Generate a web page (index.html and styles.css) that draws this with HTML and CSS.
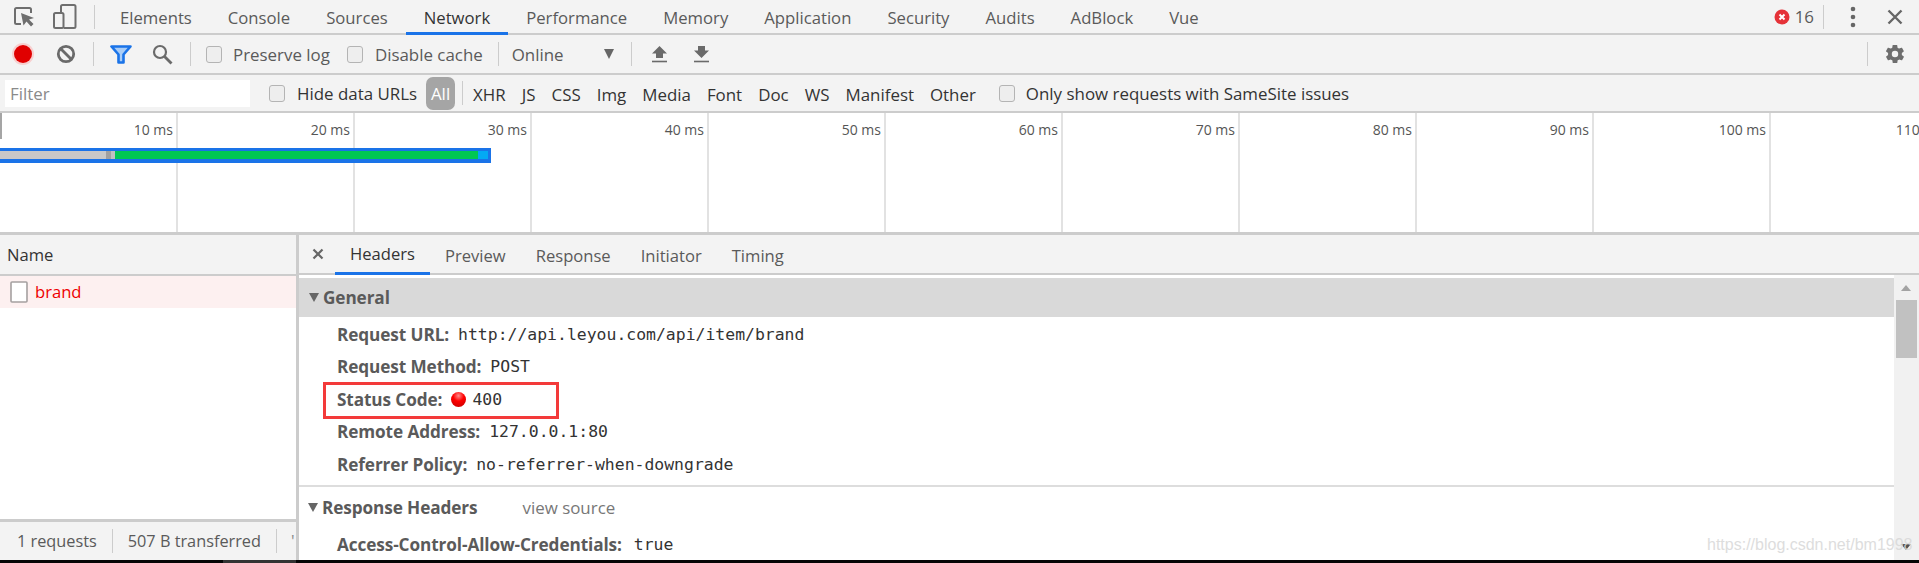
FILE: index.html
```html
<!DOCTYPE html>
<html lang="en">
<head>
<meta charset="utf-8">
<title>DevTools Network</title>
<link rel="stylesheet" href="styles.css">
</head>
<body>
<div class="app">
  <header class="bar bar-tabs">
    <svg class="ic-inspect" width="22" height="20" viewBox="0 0 22 20"><path d="M7 17H2.500A1.500 1.500 0 0 1 1 15.500V2.500A1.500 1.500 0 0 1 2.500 1h13A1.500 1.500 0 0 1 17 2.500V6" fill="none" stroke="#6e6e6e" stroke-width="2"/><path d="M7 6l13 5-5 1.500 4.500 4.500-2.500 2.500-4.500-5-3 4z" fill="#6e6e6e"/></svg>
    <svg class="ic-device" width="24" height="25" viewBox="0 0 24 25"><path d="M8 8V2.500A1.500 1.500 0 0 1 9.500 1h11.500A1.500 1.500 0 0 1 22.500 2.500V22.500A1.500 1.500 0 0 1 21 24h-10" fill="none" stroke="#6e6e6e" stroke-width="2"/><rect x="1" y="9" width="9.500" height="15" rx="1.500" fill="none" stroke="#6e6e6e" stroke-width="2"/></svg>
    <span class="sep sep-tabs"></span>
    <nav class="tabs">
      <span class="tab">Elements</span>
      <span class="tab">Console</span>
      <span class="tab">Sources</span>
      <span class="tab tab-on">Network</span>
      <span class="tab">Performance</span>
      <span class="tab">Memory</span>
      <span class="tab">Application</span>
      <span class="tab">Security</span>
      <span class="tab">Audits</span>
      <span class="tab">AdBlock</span>
      <span class="tab">Vue</span>
    </nav>
    <div class="top-right">
      <svg width="16" height="16" viewBox="0 0 16 16"><circle cx="8" cy="8" r="7.500" fill="#e53238"/><path d="M5.500 5.500l5 5m0-5l-5 5" stroke="#fff" stroke-width="2"/></svg>
      <span class="err-count">16</span>
      <span class="sep sep-err"></span>
      <svg class="ic-kebab" width="6" height="22" viewBox="0 0 6 22"><circle cx="3" cy="3" r="2.300" fill="#666"/><circle cx="3" cy="11" r="2.300" fill="#666"/><circle cx="3" cy="19" r="2.300" fill="#666"/></svg>
      <svg class="ic-close" width="16" height="16" viewBox="0 0 16 16"><path d="M1.500 1.500l13 13m0-13l-13 13" stroke="#666" stroke-width="2.400"/></svg>
    </div>
  </header>

  <div class="bar bar-tools">
    <span class="record"></span>
    <svg class="ic-stop" width="20" height="20" viewBox="0 0 20 20"><circle cx="10" cy="10" r="7.700" fill="none" stroke="#6a6a6a" stroke-width="2.800"/><path d="M4.500 4.500l11 11" stroke="#6a6a6a" stroke-width="2.800"/></svg>
    <span class="sep sep-a"></span>
    <svg class="ic-funnel" width="22" height="19" viewBox="0 0 22 19"><path d="M1.500 1.500h19l-7 8v8h-5v-8z" fill="#a9cdf7" stroke="#1a73e8" stroke-width="2.600" stroke-linejoin="round"/></svg>
    <svg class="ic-search" width="21" height="21" viewBox="0 0 21 21"><circle cx="8" cy="8" r="6" fill="none" stroke="#6a6a6a" stroke-width="2.200"/><path d="M12.500 12.500l7 7" stroke="#6a6a6a" stroke-width="2.800"/></svg>
    <span class="sep sep-b"></span>
    <span class="check check-preserve"></span>
    <span class="lbl lbl-preserve">Preserve log</span>
    <span class="check check-cache"></span>
    <span class="lbl lbl-cache">Disable cache</span>
    <span class="sep sep-c"></span>
    <span class="lbl lbl-online">Online</span>
    <span class="tri-down"></span>
    <span class="sep sep-d"></span>
    <svg class="ic-up" width="17" height="18" viewBox="0 0 17 18"><path d="M8.500 1L16 8.500h-4V13H5V8.500H1z" fill="#6a6a6a"/><path d="M1 16.500h15" stroke="#6a6a6a" stroke-width="1.600"/></svg>
    <svg class="ic-down" width="17" height="18" viewBox="0 0 17 18"><path d="M8.500 13L16 5.500h-4V1H5v4.500H1z" fill="#6a6a6a"/><path d="M1 16.500h15" stroke="#6a6a6a" stroke-width="1.600"/></svg>
    <span class="sep sep-e"></span>
    <svg class="ic-gear" width="22" height="22" viewBox="0 0 24 24"><path fill="#6e6e6e" d="M19.400 13c.1-.3.1-.7.100-1s0-.7-.1-1l2.100-1.600c.2-.2.200-.4.100-.6l-2-3.500c-.1-.2-.4-.3-.6-.2l-2.500 1c-.5-.4-1.100-.7-1.700-1l-.4-2.600c0-.2-.2-.4-.5-.4h-4c-.2 0-.4.200-.5.400l-.4 2.600c-.6.300-1.200.6-1.700 1l-2.500-1c-.2-.1-.5 0-.6.200l-2 3.500c-.1.200-.1.500.1.600L4.500 11c0 .3-.1.700-.1 1s0 .7.100 1l-2.100 1.600c-.2.200-.2.400-.1.600l2 3.500c.1.200.4.300.6.200l2.500-1c.5.400 1.100.7 1.700 1l.4 2.600c0 .2.200.4.500.4h4c.2 0 .4-.2.500-.4l.4-2.600c.6-.3 1.200-.6 1.700-1l2.500 1c.2.100.5 0 .6-.2l2-3.500c.1-.2.100-.5-.1-.6zM12 15.500a3.500 3.500 0 1 1 0-7 3.500 3.500 0 0 1 0 7z"/></svg>
  </div>

  <div class="bar bar-filter">
    <span class="filter-input">Filter</span>
    <span class="check check-hide"></span>
    <span class="lbl lbl-dark lbl-hide">Hide data URLs</span>
    <span class="pill">All</span>
    <span class="sep sep-f"></span>
    <div class="types">
      <span>XHR</span><span>JS</span><span>CSS</span><span>Img</span><span>Media</span><span>Font</span><span>Doc</span><span>WS</span><span>Manifest</span><span>Other</span>
    </div>
    <span class="check check-same"></span>
    <span class="lbl lbl-dark">Only show requests with SameSite issues</span>
  </div>

  <section class="timeline">
    <div class="ticks">
      <div class="tick">10 ms</div><div class="tick">20 ms</div><div class="tick">30 ms</div><div class="tick">40 ms</div><div class="tick">50 ms</div><div class="tick">60 ms</div><div class="tick">70 ms</div><div class="tick">80 ms</div><div class="tick">90 ms</div><div class="tick">100 ms</div><div class="tick">110 ms</div>
    </div>
    <span class="start-mark"></span>
    <div class="wbar">
      <span class="seg seg-grey"></span><span class="seg seg-dk"></span><span class="seg seg-lt"></span><span class="seg seg-green"></span><span class="seg seg-blue"></span>
    </div>
  </section>

  <main class="panes">
    <aside class="names">
      <div class="names-head">Name</div>
      <div class="names-row">
        <svg width="18" height="22" viewBox="0 0 18 22"><rect x="1" y="1" width="16" height="20" rx="1" fill="#fff" stroke="#a5a0a0" stroke-width="1.600"/></svg>
        <span class="names-text">brand</span>
      </div>
      <div class="names-fill"></div>
      <div class="status">
        <span class="st st-first">1 requests</span>
        <span class="st">507 B transferred</span>
        <span class="st-more">'</span>
      </div>
    </aside>
    <section class="detail">
      <div class="detail-tabs">
        <svg class="ic-x" width="12" height="12" viewBox="0 0 12 12"><path d="M1.500 1.500l9 9m0-9l-9 9" stroke="#666" stroke-width="2.200"/></svg>
        <span class="dtab dtab-on">Headers</span>
        <span class="dtab">Preview</span>
        <span class="dtab">Response</span>
        <span class="dtab">Initiator</span>
        <span class="dtab">Timing</span>
      </div>
      <div class="detail-body">
        <div class="content">
          <div class="sec-general"><span class="tri-open"></span><b>General</b></div>
          <div class="rows">
            <div class="row"><b>Request URL:</b><code>http://api.leyou.com/api/item/brand</code></div>
            <div class="row"><b>Request Method:</b><code>POST</code></div>
            <div class="row"><b>Status Code:</b><span class="dot"></span><code class="code-status">400</code></div>
            <div class="row"><b>Remote Address:</b><code>127.0.0.1:80</code></div>
            <div class="row"><b>Referrer Policy:</b><code>no-referrer-when-downgrade</code></div>
          </div>
          <div class="sec-resp"><span class="tri-open"></span><b>Response Headers</b><span class="view-src">view source</span></div>
          <div class="row row-last"><b>Access-Control-Allow-Credentials:</b><code>true</code></div>
          <span class="red-box"></span>
        </div>
        <div class="scroll">
          <span class="sc-up"></span>
          <span class="sc-thumb"></span>
          <span class="sc-down"></span>
        </div>
      </div>
    </section>
    <span class="mark">https://blog.csdn.net/bm1998</span>
  </main>
  <footer class="edge"><span class="edge-lit"></span></footer>
</div>
</body>
</html>
```
FILE: styles.css
```css
* { box-sizing: border-box; }
html, body { margin: 0; padding: 0; height: 100%; overflow: hidden; }
body { font-family: "Open Sans", "Noto Sans", sans-serif; font-size: 16.9px; color: #5a5a5a; background: #fff; }
.app { width: 1919px; height: 563px; display: flex; flex-direction: column; }

.bar { display: flex; align-items: center; background: #f3f3f3; flex: none; border-bottom: 2px solid #ccc; }
.bar-tabs { height: 35px; }
.bar-tools { height: 40px; }
.bar-filter { height: 38px; }
.sep { flex: none; width: 1px; background: #ccc; height: 24px; }

.ic-inspect { margin-left: 14px; flex: none; }
.ic-device { margin-left: 17px; flex: none; }
.sep-tabs { margin-left: 17px; }
.tabs { display: flex; align-self: stretch; margin-left: 7px; }
.tab { padding: 0 18px; display: flex; align-items: center; height: 35px; font-size: 16.700px; }
.tab-on { color: #333; border-bottom: 3px solid #1a73e8; padding-top: 3px; }
.top-right { margin-left: auto; display: flex; align-items: center; padding-right: 16px; }
.err-count { margin-left: 5px; }
.sep-err { margin-left: 9px; }
.ic-kebab { margin-left: 26px; }
.ic-close { margin-left: 31px; }

.record { flex: none; width: 18px; height: 18px; margin-left: 14px; border-radius: 50%; background: #e00000; box-shadow: 0 0 0 2px #f7cfcf; }
.ic-stop { flex: none; margin-left: 24px; }
.sep-a { margin-left: 17px; }
.ic-funnel { flex: none; margin-left: 16px; }
.ic-search { flex: none; margin-left: 20px; }
.sep-b { margin-left: 17px; }
.check { flex: none; width: 16px; height: 17px; border: 1.500px solid #b4b4b4; border-radius: 3px; background: #eee; }
.check-preserve { margin-left: 15px; }
.lbl { flex: none; white-space: nowrap; }
.lbl-preserve { margin-left: 11px; }
.check-cache { margin-left: 17px; }
.lbl-cache { margin-left: 12px; }
.sep-c { margin-left: 15px; }
.lbl-online { margin-left: 13px; }
.tri-down { flex: none; margin-left: 40px; width: 0; height: 0; border-left: 5.500px solid transparent; border-right: 5.500px solid transparent; border-top: 10px solid #666; }
.sep-d { margin-left: 17px; }
.ic-up { flex: none; margin-left: 19px; }
.ic-down { flex: none; margin-left: 25px; }
.sep-e { margin-left: auto; }
.ic-gear { flex: none; margin-left: 16px; margin-right: 13px; }

.filter-input { flex: none; margin-left: 5px; width: 245px; height: 27px; background: #fff; color: #8a8a8a; padding-left: 5px; display: flex; align-items: center; }
.check-hide { margin-left: 19px; }
.lbl-dark { color: #333; }
.lbl-hide { margin-left: 12px; }
.pill { flex: none; margin-left: 9px; width: 29px; height: 33px; border-radius: 7px; background: #a5a5a5; color: #fff; display: flex; align-items: center; justify-content: center; }
.sep-f { margin-left: 7px; }
.types { display: flex; gap: 16px; margin-left: 10px; color: #333; padding-top: 2px; }
.check-same { margin-left: 23px; }
.check-same + .lbl { margin-left: 11px; }

.timeline { position: relative; flex: none; height: 122px; background: #fff; border-bottom: 3px solid #ccc; overflow: hidden; }
.ticks { display: flex; height: 100%; margin-left: 1px; }
.tick { flex: none; width: 177px; padding: 7px 3px 0 0; text-align: right; font-size: 14px; color: #555; border-right: 2px solid #e2e2e2; white-space: nowrap; }
.start-mark { position: absolute; left: 0; top: 0; width: 2px; height: 26px; background: #a5a5a5; }
.wbar { position: absolute; left: 0; top: 35px; width: 491px; height: 15px; display: flex; background: #1a73e8; padding: 3px 3px 4px 0; }
.seg { display: block; height: 100%; }
.seg-grey { width: 106px; background: #c8c8c8; }
.seg-dk { width: 5px; background: #a0a0a0; }
.seg-lt { width: 4px; background: #c0c0c0; }
.seg-green { width: 363px; background: #00c853; }
.seg-blue { width: 10px; background: #03a9f4; }

.panes { position: relative; flex: 1; min-height: 0; display: flex; }
.names { flex: none; width: 299px; display: flex; flex-direction: column; border-right: 3px solid #ccc; }
.names-head { flex: none; height: 41px; background: #f3f3f3; border-bottom: 2px solid #ccc; padding-left: 7px; display: flex; align-items: center; color: #333; font-size: 16.600px; }
.names-row { flex: none; height: 32px; background: #fdf0f0; color: #ee0000; display: flex; align-items: center; padding-left: 10px; gap: 7px; font-size: 16.600px; }
.names-text { padding-bottom: 2px; }
.names-fill { flex: 1; }
.status { flex: none; height: 41px; background: #f3f3f3; border-top: 3px solid #ccc; display: flex; align-items: center; font-size: 16.300px; }
.st { padding: 0 15px; height: 24px; line-height: 24px; border-right: 1px solid #ccc; white-space: nowrap; }
.st-first { padding-left: 17px; }
.st-more { padding-left: 14px; color: #888; }

.detail { flex: 1; min-width: 0; display: flex; flex-direction: column; }
.detail-tabs { flex: none; height: 40px; background: #f3f3f3; border-bottom: 2px solid #ccc; display: flex; align-items: stretch; }
.ic-x { flex: none; align-self: center; margin-left: 13px; margin-right: 11px; }
.dtab { padding: 0 15px; display: flex; align-items: center; height: 40px; font-size: 16.600px; }
.dtab-on { color: #333; border-bottom: 3px solid #1a73e8; }
.detail-body { flex: 1; min-height: 0; display: flex; }
.content { position: relative; flex: 1; min-width: 0; padding-top: 3px; overflow: hidden; }
.sec-general { height: 39px; background: #d9d9d9; display: flex; align-items: center; padding-left: 10px; }
.tri-open { flex: none; width: 0; height: 0; border-left: 5.500px solid transparent; border-right: 5.500px solid transparent; border-top: 9px solid #666; margin-right: 4px; }
.rows { height: 170px; padding-top: 1px; border-bottom: 2px solid #ddd; }
.row { height: 32.500px; display: flex; align-items: center; padding-left: 38px; white-space: nowrap; }
.row b, .sec-general b, .sec-resp b { font-weight: 700; font-size: 17.200px; color: #5a5a5a; letter-spacing: -0.1px; }
code { font-family: "DejaVu Sans Mono", "Liberation Mono", monospace; font-size: 16.450px; color: #333; margin-left: 9px; }
.dot { flex: none; width: 15px; height: 15px; border-radius: 50%; margin-left: 9px; background: radial-gradient(circle at 50% 25%, #ff8a8a 0, #f00 40%, #c00000 100%); }
.code-status { margin-left: 6px; }
.sec-resp { height: 41px; display: flex; align-items: center; padding-left: 9px; }
.view-src { margin-left: 45px; color: #777; }
.row-last { height: 32px; }
.row-last code { margin-left: 12px; }
.red-box { position: absolute; left: 24px; top: 107px; width: 236px; height: 37px; border: 3px solid #f33a3a; }

.scroll { position: relative; flex: none; width: 25px; background: #f1f1f1; }
.sc-up { position: absolute; left: 7px; top: 10px; width: 0; height: 0; border-left: 5.500px solid transparent; border-right: 5.500px solid transparent; border-bottom: 6px solid #a3a3a3; }
.sc-thumb { position: absolute; left: 2px; top: 25px; width: 21px; height: 58px; background: #c1c1c1; }
.sc-down { position: absolute; left: 7px; top: 269px; width: 0; height: 0; border-left: 5.500px solid transparent; border-right: 5.500px solid transparent; border-top: 6px solid #505050; }
.mark { position: absolute; left: 1707px; top: 301px; font-family: "Liberation Sans", Arial, sans-serif; font-size: 16px; color: #d8d8d8; white-space: nowrap; opacity: .85; }

.edge { flex: none; height: 3px; background: #050505; position: relative; }
.edge-lit { position: absolute; left: 223px; top: 0; width: 73px; height: 3px; background: #333; }
```
